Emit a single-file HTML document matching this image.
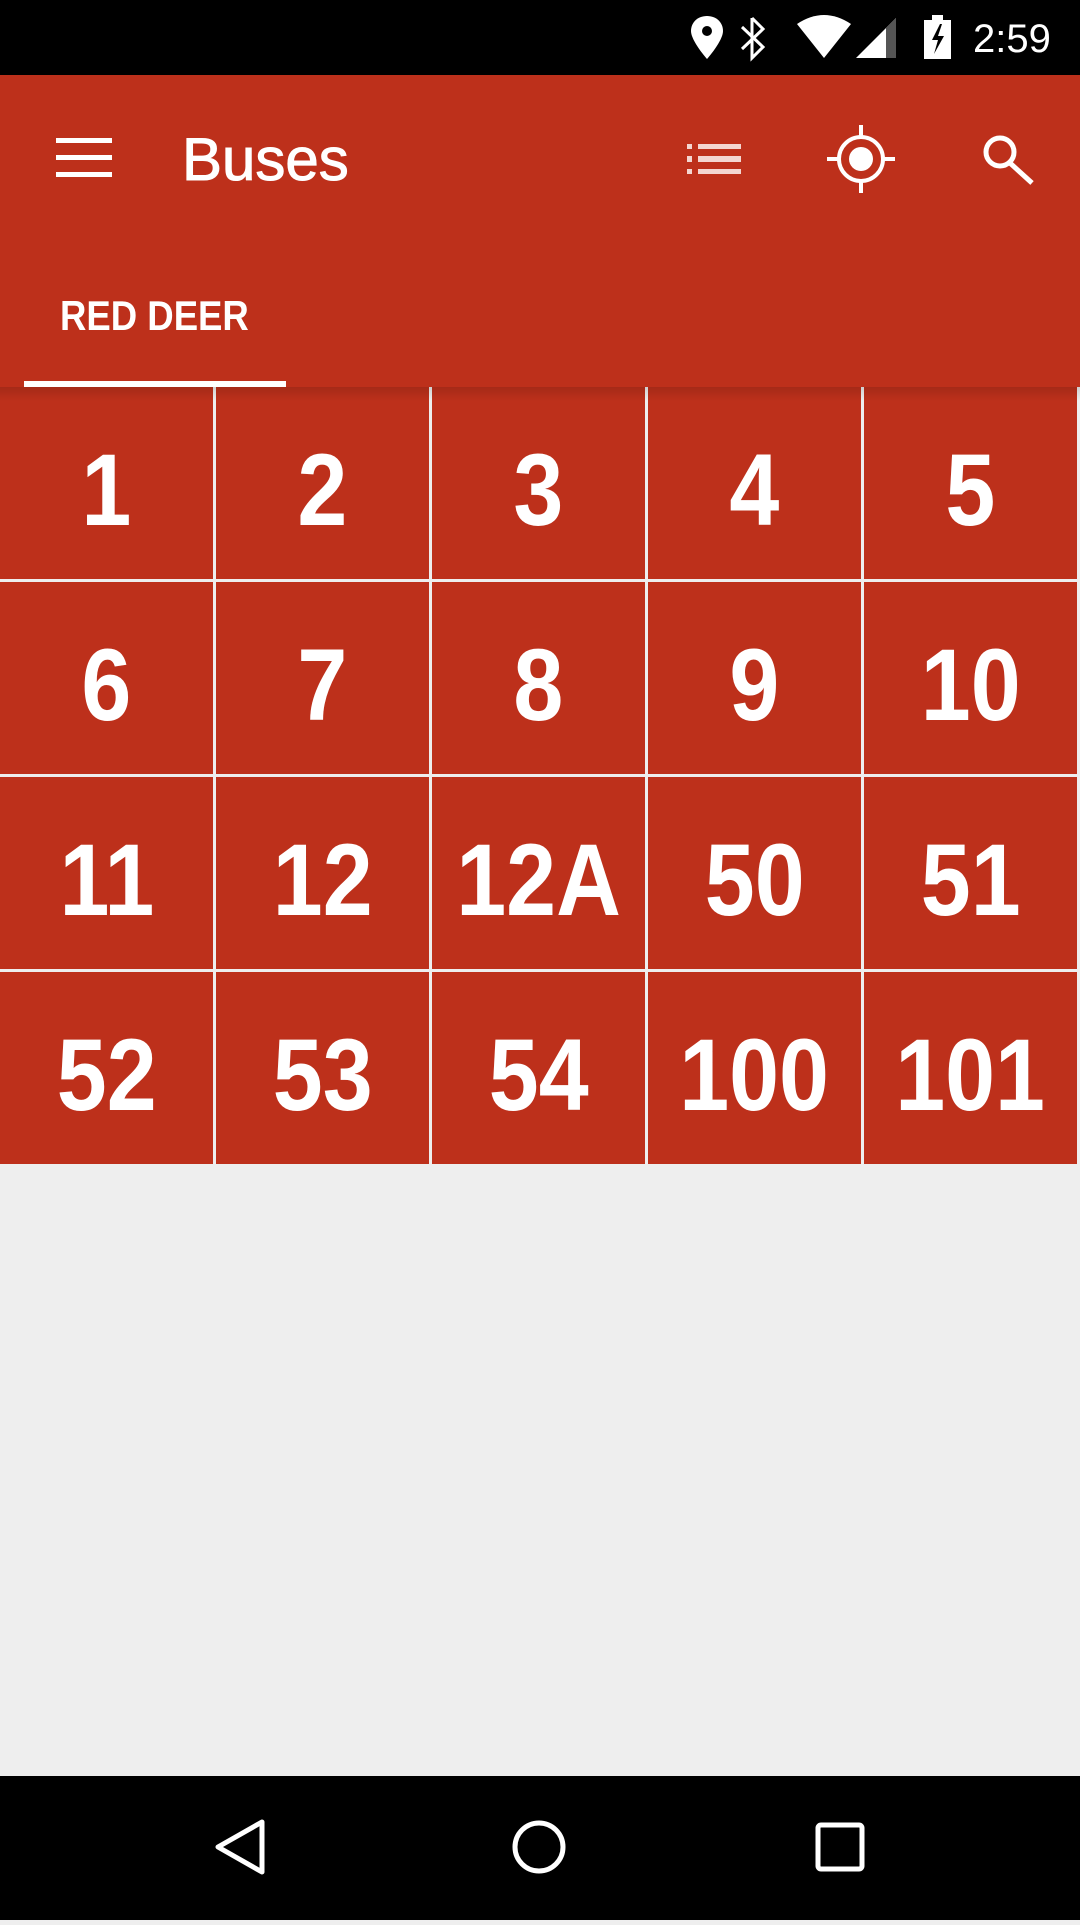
<!DOCTYPE html>
<html><head><meta charset="utf-8"><style>
*{margin:0;padding:0;box-sizing:border-box}
body{width:1080px;height:1920px;background:#eeeeee;position:relative;overflow:hidden;font-family:"Liberation Sans",sans-serif}
.sb{position:absolute;left:0;top:0;width:1080px;height:75px;background:#000}
.app{position:absolute;left:0;top:75px;width:1080px;height:312px;background:#bd301b}
.title{position:absolute;left:182px;top:50px;color:#fff;font-size:60px;line-height:70px;-webkit-text-stroke:1px #fff}
.tab{position:absolute;left:60px;top:216px;color:#fff;font-size:42px;font-weight:bold;transform:scaleX(0.87);transform-origin:left top;line-height:50px}
.ind{position:absolute;left:24px;top:306px;width:262px;height:6px;background:#fff}
.grid{position:absolute;left:0;top:387px;width:1080px;height:780px}
.c{position:absolute;width:213px;height:192px;background:#bd301b;color:#fff;font-weight:bold;font-size:102px;display:flex;align-items:center;justify-content:center;padding-top:14px}
.c span{display:inline-block;transform:scaleX(0.88)}
.shadow{position:absolute;left:0;top:387px;width:1080px;height:14px;background:linear-gradient(rgba(0,0,0,0.13),rgba(0,0,0,0))}
.nav{position:absolute;left:0;top:1776px;width:1080px;height:144px;background:#000}
</style></head><body>
<div class="sb">
<svg width="1080" height="75" style="position:absolute;left:0;top:0">
<path d="M707 16c-10 0-16 7-16 15 0 10 16 28 16 28s16-18 16-28c0-8-6-15-16-15z" fill="#fff"/><circle cx="707" cy="31" r="5" fill="#000"/>
<path d="M752 18v40l11-11-21-20M752 18l11 11-21 20" fill="none" stroke="#fff" stroke-width="3"/>
<path d="M797 24q27-18 54 0l-27 34z" fill="#fff"/>
<path d="M856 58l40-40v40z" fill="#fff"/><path d="M886 28l10-10v40h-10z" fill="#555"/>
<rect x="924" y="20" width="27" height="39" fill="#fff"/><rect x="932" y="15" width="11" height="6" fill="#fff"/>
<path d="M940 24l-8 16h6l-4 14 10-18h-6l4-12z" fill="#000"/>
<text x="973" y="52" fill="#fff" font-size="40" font-family="Liberation Sans">2:59</text>
</svg></div>
<div class="app">
<svg width="1080" height="312" style="position:absolute;left:0;top:0">
<rect x="56" y="63" width="56" height="5" fill="#fff"/><rect x="56" y="80" width="56" height="5" fill="#fff"/><rect x="56" y="97" width="56" height="5" fill="#fff"/>
<g fill="#f4d6d1"><rect x="687" y="69" width="5" height="5"/><rect x="698" y="69" width="43" height="5"/><rect x="687" y="81" width="5" height="6"/><rect x="698" y="81" width="43" height="6"/><rect x="687" y="94" width="5" height="5"/><rect x="698" y="94" width="43" height="5"/></g>
<circle cx="861" cy="84" r="22" fill="none" stroke="#fff" stroke-width="4"/><circle cx="861" cy="84" r="12" fill="#fff"/>
<path d="M861 50v12M861 106v12M827 84h12M883 84h12" stroke="#fff" stroke-width="4"/>
<circle cx="1000" cy="77" r="14" fill="none" stroke="#fff" stroke-width="5"/><path d="M1010 88l22 20" stroke="#fff" stroke-width="5"/>
</svg>
<div class="title">Buses</div>
<div class="tab">RED DEER</div>
<div class="ind"></div>
</div>
<div class="grid">
<div class="c" style="left:0;top:0"><span>1</span></div>
<div class="c" style="left:216px;top:0"><span>2</span></div>
<div class="c" style="left:432px;top:0"><span>3</span></div>
<div class="c" style="left:648px;top:0"><span>4</span></div>
<div class="c" style="left:864px;top:0"><span>5</span></div>
<div class="c" style="left:0;top:195px"><span>6</span></div>
<div class="c" style="left:216px;top:195px"><span>7</span></div>
<div class="c" style="left:432px;top:195px"><span>8</span></div>
<div class="c" style="left:648px;top:195px"><span>9</span></div>
<div class="c" style="left:864px;top:195px"><span>10</span></div>
<div class="c" style="left:0;top:390px"><span>11</span></div>
<div class="c" style="left:216px;top:390px"><span>12</span></div>
<div class="c" style="left:432px;top:390px"><span>12A</span></div>
<div class="c" style="left:648px;top:390px"><span>50</span></div>
<div class="c" style="left:864px;top:390px"><span>51</span></div>
<div class="c" style="left:0;top:585px"><span>52</span></div>
<div class="c" style="left:216px;top:585px"><span>53</span></div>
<div class="c" style="left:432px;top:585px"><span>54</span></div>
<div class="c" style="left:648px;top:585px"><span>100</span></div>
<div class="c" style="left:864px;top:585px"><span>101</span></div>
</div>
<div class="shadow"></div>
<div class="nav">
<svg width="1080" height="144">
<path d="M262 46v50l-44-25z" fill="none" stroke="#fff" stroke-width="5" stroke-linejoin="round"/>
<circle cx="539" cy="71" r="24" fill="none" stroke="#fff" stroke-width="5"/>
<rect x="818" y="49" width="44" height="44" rx="3" fill="none" stroke="#fff" stroke-width="5"/>
</svg>
</div>
</body></html>
